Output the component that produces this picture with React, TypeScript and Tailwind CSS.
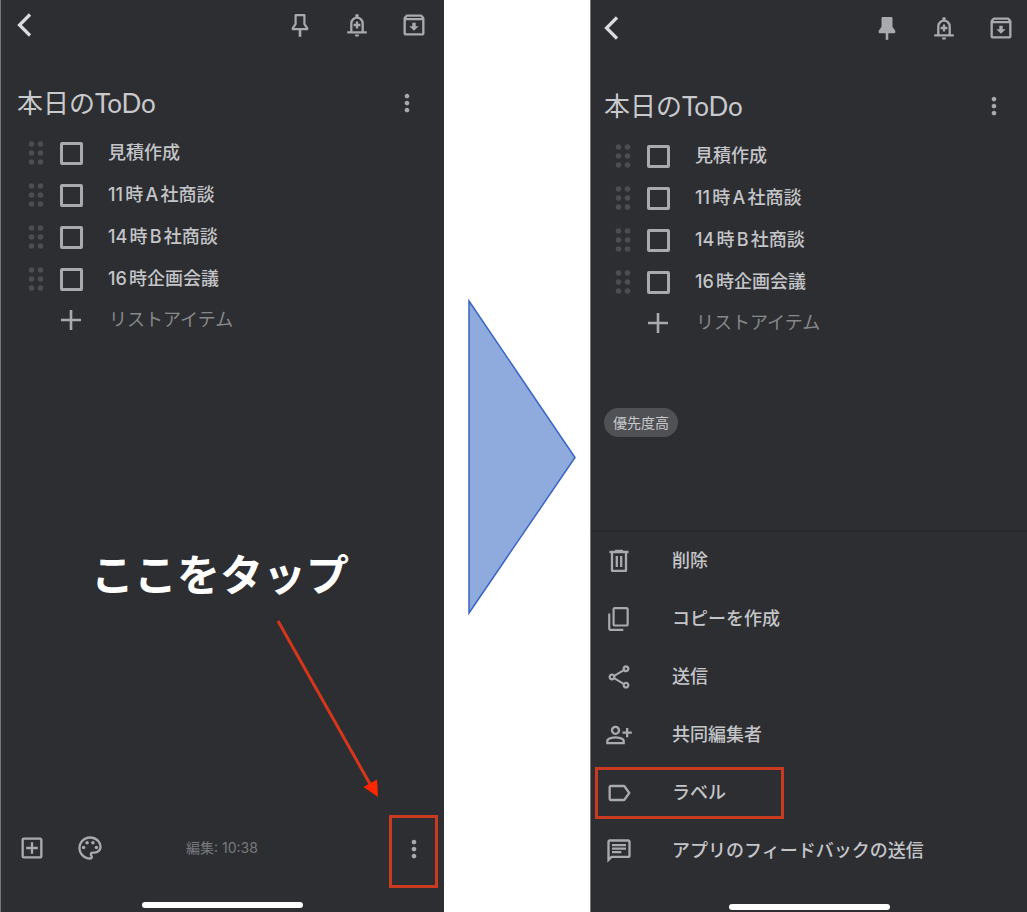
import type { ReactNode } from "react";
import {
  MdContentCopy,
  MdLabelOutline,
  MdMoreVert,
  MdOutlineAddBox,
  MdOutlineArchive,
  MdOutlineChat,
  MdOutlinePalette,
  MdOutlinePersonAddAlt,
  MdOutlineShare,
} from "react-icons/md";

const todos = ["見積作成", "11時A社商談", "14時B社商談", "16時企画会議"];

function BackIcon() {
  return (
    <svg width="16" height="24" viewBox="0 0 16 24" fill="none" aria-hidden="true">
      <path d="M14 1.500 3.500 12l10.500 10.500" stroke="currentColor" strokeWidth="3.200" />
    </svg>
  );
}

function PinIcon({ filled }: { filled: boolean }) {
  return (
    <svg width="24" height="24" viewBox="0 0 24 24" fill="none" aria-hidden="true">
      <path
        d="M7.600 2.200h8.800v9l2.800 4v1H4.800v-1l2.800-4z"
        fill={filled ? "currentColor" : "none"}
        stroke="currentColor"
        strokeWidth="2.200"
        strokeLinejoin="round"
      />
      <path d="M12 16v7.800" stroke="currentColor" strokeWidth="2.600" />
    </svg>
  );
}

function ReminderIcon() {
  return (
    <svg width="24" height="24" viewBox="0 0 24 24" fill="none" aria-hidden="true">
      <path
        d="M6.300 19v-8.600a5.700 5.700 0 0 1 11.400 0V19M2.200 19.400h19.600M12 8.600v6.800M8.600 12h6.800"
        stroke="currentColor"
        strokeWidth="2.300"
      />
      <circle cx="12" cy="2.800" r="1.800" fill="currentColor" />
      <path d="M9.800 21.500h4.400a2.200 2.200 0 0 1-4.400 0z" fill="currentColor" />
    </svg>
  );
}

function TrashIcon() {
  return (
    <svg width="24" height="24" viewBox="0 0 24 24" fill="none" aria-hidden="true">
      <path
        d="M2.500 3h19M8 2h8M5 3v18.800h14V3M9.800 7v11M14.200 7v11"
        stroke="currentColor"
        strokeWidth="2.300"
        strokeLinejoin="round"
      />
    </svg>
  );
}

function PlusIcon() {
  return (
    <svg width="22" height="22" viewBox="0 0 22 22" aria-hidden="true">
      <path d="M11 1v20M1 11h20" stroke="currentColor" strokeWidth="2.600" />
    </svg>
  );
}

function DragHandle() {
  return (
    <svg width="16" height="26" viewBox="0 0 16 26" fill="#4c4d50" aria-hidden="true">
      {[4, 13, 22].map((y) => (
        <g key={y}>
          <circle cx="3.500" cy={y} r="2.800" />
          <circle cx="12.500" cy={y} r="2.800" />
        </g>
      ))}
    </svg>
  );
}

function NoteHeader({ pinned }: { pinned: boolean }) {
  return (
    <header className="flex h-[50px] items-center px-3">
      <button aria-label="戻る" className="text-[#dcdcde]">
        <BackIcon />
      </button>
      <div className="ml-auto flex items-center gap-[29px]">
        <button aria-label="固定" className="flex w-7 justify-center">
          <PinIcon filled={pinned} />
        </button>
        <button aria-label="リマインダー" className="flex w-7 justify-center">
          <ReminderIcon />
        </button>
        <button aria-label="アーカイブ">
          <MdOutlineArchive size={28} />
        </button>
      </div>
    </header>
  );
}

function NoteBody({ id }: { id: string }) {
  return (
    <section>
      <div className="mt-[33px] flex h-10 items-center pl-[13px] pr-[19px]">
        <h1 className="font-[Lato,'Noto_Sans_CJK_JP',sans-serif] text-[26px] text-[#c8c9cc]">
          本日のToDo
        </h1>
        <button aria-label="メニュー" className="ml-auto">
          <MdMoreVert size={28} />
        </button>
      </div>
      <ul className="mt-[9px]">
        {todos.map((todo, i) => (
          <li key={todo} className="flex h-[42px] items-center pl-6">
            <DragHandle />
            <input
              id={`${id}-${i}`}
              type="checkbox"
              className="ml-4 size-[23px] appearance-none rounded-xs border-[3px] border-[#a9aaad]"
            />
            <label
              htmlFor={`${id}-${i}`}
              className="ml-[25px] text-lg font-medium text-[#c4c5c8] [text-autospace:normal]"
            >
              {todo}
            </label>
          </li>
        ))}
      </ul>
      <button className="flex h-10 items-center pl-14">
        <PlusIcon />
        <span className="ml-[27px] text-lg text-[#87888b]">リストアイテム</span>
      </button>
    </section>
  );
}

function Phone({ className, children }: { className: string; children: ReactNode }) {
  return (
    <main
      className={`flex min-w-0 flex-col border-l border-l-[#77787b] bg-[#2d2e32] text-[#a9aaad] ${className}`}
    >
      {children}
    </main>
  );
}

function HomeBar() {
  return <div className="mx-auto mt-auto h-[6px] w-[161px] rounded-full bg-white" />;
}

function MenuItem({
  icon,
  label,
  highlighted = false,
}: {
  icon: ReactNode;
  label: string;
  highlighted?: boolean;
}) {
  return (
    <li className="flex h-[58px] items-center pl-1">
      <button
        className={`flex h-[52px] w-[189px] items-center border-[3px] pl-[7px] ${
          highlighted ? "border-[#c93a20]" : "border-transparent"
        }`}
      >
        <span className="flex w-7 shrink-0 justify-center">{icon}</span>
        <span className="ml-[39px] whitespace-nowrap text-lg font-medium text-[#c4c5c8]">
          {label}
        </span>
      </button>
    </li>
  );
}

export default function App() {
  return (
    <div className="grid min-h-screen grid-cols-[444fr_146fr_437fr] bg-white font-[Inter,'Noto_Sans_CJK_JP',sans-serif]">
      <Phone className="pb-1 pl-[3px] pr-1">
        <NoteHeader pinned={false} />
        <NoteBody id="before" />
        <p className="mt-[203px] flex h-16 items-center justify-center whitespace-nowrap pr-1 text-[43px] font-bold text-white">
          ここをタップ
        </p>
        <svg
          width="104"
          height="180"
          viewBox="0 0 104 180"
          className="ml-[272px] mt-3"
          aria-hidden="true"
        >
          <path d="M2 2 94 165" stroke="#d6361a" strokeWidth="3" />
          <path d="M102 178 87.500 168 101 160.500z" fill="#ff2600" />
        </svg>
        <footer className="mt-4 flex items-start pl-[14px] pr-[2px]">
          <div className="flex h-[66px] items-center gap-[30px]">
            <button aria-label="追加">
              <MdOutlineAddBox size={28} />
            </button>
            <button aria-label="背景">
              <MdOutlinePalette size={28} />
            </button>
          </div>
          <p className="ml-[82px] flex h-[66px] items-center text-sm text-[#77787b]">
            編集: 10:38
          </p>
          <button
            aria-label="その他"
            className="ml-auto flex h-[73px] w-[49px] items-center justify-center border-[3px] border-[#c93a20] pb-[6px]"
          >
            <MdMoreVert size={28} />
          </button>
        </footer>
        <HomeBar />
      </Phone>

      <div className="flex items-start justify-end pr-3 pt-[298px]">
        <svg width="112" height="318" viewBox="0 0 112 318" aria-hidden="true">
          <path d="M3 3 109 159.500 3 315z" fill="#8faadc" stroke="#3865c5" strokeWidth="1.500" />
        </svg>
      </div>

      <Phone className="pb-[2px] pt-[3px]">
        <NoteHeader pinned />
        <NoteBody id="after" />
        <span className="ml-[13px] mt-[65px] flex h-[29px] w-[74px] items-center justify-center rounded-full bg-[#505154] text-sm text-[#c8c9cc]">
          優先度高
        </span>
        <ul className="mt-[93px] border-t-2 border-[#27282b]">
          <MenuItem icon={<TrashIcon />} label="削除" />
          <MenuItem icon={<MdContentCopy size={26} className="-scale-y-100" />} label="コピーを作成" />
          <MenuItem icon={<MdOutlineShare size={30} />} label="送信" />
          <MenuItem icon={<MdOutlinePersonAddAlt size={28} />} label="共同編集者" />
          <MenuItem icon={<MdLabelOutline size={28} />} label="ラベル" highlighted />
          <MenuItem icon={<MdOutlineChat size={30} />} label="アプリのフィードバックの送信" />
        </ul>
        <HomeBar />
      </Phone>
    </div>
  );
}
